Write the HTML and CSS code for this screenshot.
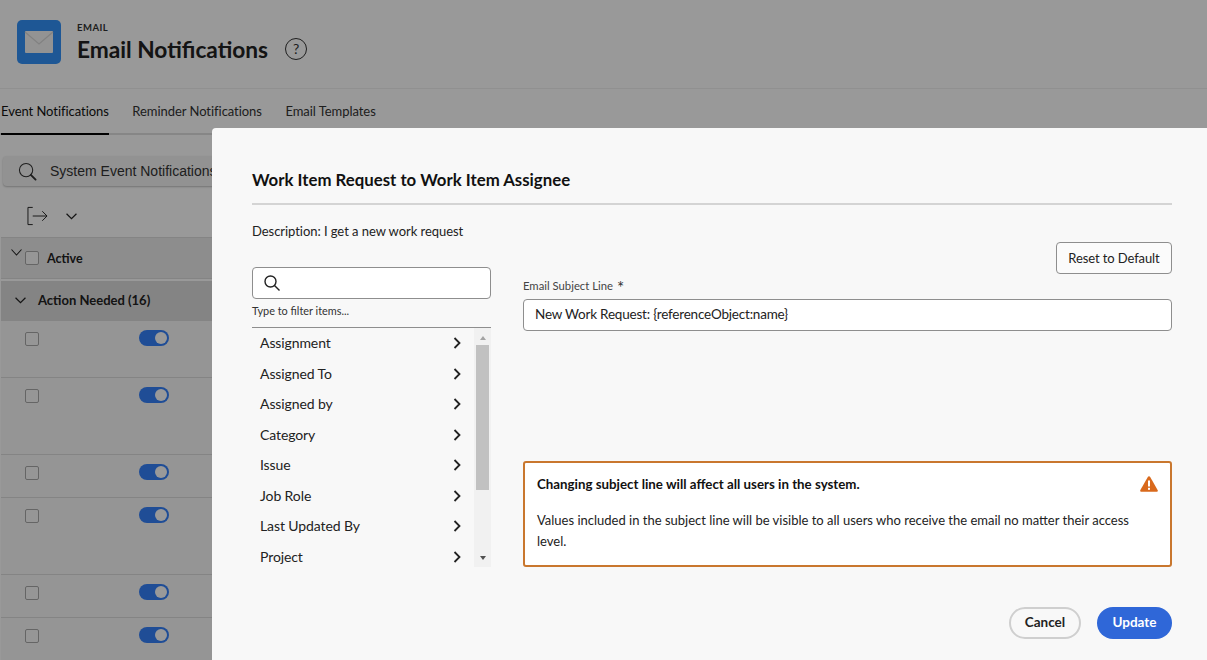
FILE: index.html
```html
<!DOCTYPE html>
<html lang="en">
<head>
<meta charset="utf-8">
<title>Email Notifications</title>
<link rel="stylesheet" href="styles.css">
</head>
<body>
<div class="page">
  <header class="head">
    <svg class="logo" viewBox="0 0 44 44"><rect width="44" height="44" rx="5" fill="#3292f8"/><rect x="8" y="11" width="28" height="22" rx="1" fill="#f5f5f5"/><path d="M8 12l14 12 14-12" fill="none" stroke="#d8d8d8" stroke-width="1.2"/></svg>
    <div class="head-text">
      <div class="eyebrow">EMAIL</div>
      <h1 class="title">Email Notifications</h1>
    </div>
    <span class="help">?</span>
  </header>
  <nav class="tabs">
    <a class="tab tab-on">Event Notifications</a>
    <a class="tab">Reminder Notifications</a>
    <a class="tab">Email Templates</a>
  </nav>
  <div class="search">
    <svg class="search-ic" viewBox="0 0 20 20"><circle cx="8.5" cy="8.5" r="7" fill="none" stroke="#333" stroke-width="1.1"/><path d="M13.5 13.5l5 5" stroke="#333" stroke-width="2" stroke-linecap="round"/></svg>
    <span class="search-text">System Event Notifications</span>
  </div>
  <div class="tools">
    <svg class="export" viewBox="0 0 22 20"><path d="M6 1H1v18h5M6 10h15M16 5l5 5-5 5" fill="none" stroke="#222" stroke-width="1"/></svg>
    <svg class="chev" viewBox="0 0 10 6"><path d="M.5.5L5 5 9.500.5" fill="none" stroke="#222" stroke-width="1.1"/></svg>
  </div>
  <div class="thead">
    <svg class="chev-a" viewBox="0 0 11 7"><path d="M.5.5L5.500 6l5-5.500" fill="none" stroke="#222" stroke-width="1.1"/></svg>
    <span class="check"></span>
    <span class="thead-label">Active</span>
  </div>
  <div class="group">
    <svg class="chev-b" viewBox="0 0 10 6"><path d="M.5.5L5 5 9.500.5" fill="none" stroke="#222" stroke-width="1.1"/></svg>
    <span class="group-label">Action Needed (16)</span>
  </div>
  <div class="row row-a"><span class="check"></span><span class="toggle"></span></div>
  <div class="row row-b"><span class="check"></span><span class="toggle"></span></div>
  <div class="row row-c"><span class="check"></span><span class="toggle"></span></div>
  <div class="row row-b"><span class="check"></span><span class="toggle"></span></div>
  <div class="row row-c"><span class="check"></span><span class="toggle"></span></div>
  <div class="row row-c"><span class="check"></span><span class="toggle"></span></div>
</div>
<div class="scrim"></div>
<section class="modal">
  <h2 class="m-title">Work Item Request to Work Item Assignee</h2>
  <p class="desc">Description: I get a new work request</p>
  <div class="cols">
    <div class="left">
      <div class="filter">
        <svg class="filter-ic" viewBox="0 0 16 16"><circle cx="6.500" cy="6.500" r="5.500" fill="none" stroke="#222" stroke-width="1.400"/><path d="M10.500 10.500l5 5" stroke="#222" stroke-width="1.400"/></svg>
      </div>
      <div class="hint">Type to filter items...</div>
      <div class="picker">
        <ul class="items">
          <li class="item">Assignment<svg class="arrow" viewBox="0 0 8 12"><path d="M1.500 1L6.500 6l-5 5" fill="none" stroke="#222" stroke-width="1.800"/></svg></li>
          <li class="item">Assigned To<svg class="arrow" viewBox="0 0 8 12"><path d="M1.500 1L6.500 6l-5 5" fill="none" stroke="#222" stroke-width="1.800"/></svg></li>
          <li class="item">Assigned by<svg class="arrow" viewBox="0 0 8 12"><path d="M1.500 1L6.500 6l-5 5" fill="none" stroke="#222" stroke-width="1.800"/></svg></li>
          <li class="item">Category<svg class="arrow" viewBox="0 0 8 12"><path d="M1.500 1L6.500 6l-5 5" fill="none" stroke="#222" stroke-width="1.800"/></svg></li>
          <li class="item">Issue<svg class="arrow" viewBox="0 0 8 12"><path d="M1.500 1L6.500 6l-5 5" fill="none" stroke="#222" stroke-width="1.800"/></svg></li>
          <li class="item">Job Role<svg class="arrow" viewBox="0 0 8 12"><path d="M1.500 1L6.500 6l-5 5" fill="none" stroke="#222" stroke-width="1.800"/></svg></li>
          <li class="item">Last Updated By<svg class="arrow" viewBox="0 0 8 12"><path d="M1.500 1L6.500 6l-5 5" fill="none" stroke="#222" stroke-width="1.800"/></svg></li>
          <li class="item">Project<svg class="arrow" viewBox="0 0 8 12"><path d="M1.500 1L6.500 6l-5 5" fill="none" stroke="#222" stroke-width="1.800"/></svg></li>
        </ul>
        <div class="sbar">
          <span class="sb-up"></span>
          <span class="sb-thumb"></span>
          <span class="sb-down"></span>
        </div>
      </div>
    </div>
    <div class="right">
      <button class="reset">Reset to Default</button>
      <label class="field-label">Email Subject Line <span class="req">*</span></label>
      <div class="subject">New Work Request: {referenceObject:name}</div>
      <div class="warn">
        <div class="warn-head">
          <strong class="warn-title">Changing subject line will affect all users in the system.</strong>
          <svg class="warn-ic" viewBox="0 0 18 16"><path d="M9 .3c.5 0 .9.300 1.200.800l7.400 12.900c.5.900 0 1.700-1 1.700H1.400c-1 0-1.500-.8-1-1.700L7.800 1.100C8.100.6 8.500.3 9 .3z" fill="#d9691c"/><rect x="8" y="4.500" width="2" height="6" fill="#fff"/><rect x="8" y="11.800" width="2" height="2" fill="#fff"/></svg>
        </div>
        <p class="warn-body">Values included in the subject line will be visible to all users who receive the email no matter their access level.</p>
      </div>
    </div>
  </div>
  <div class="actions">
    <button class="btn btn-cancel">Cancel</button>
    <button class="btn btn-update">Update</button>
  </div>
</section>
</body>
</html>
```
FILE: styles.css
```css
* { box-sizing: border-box; }
html, body { margin: 0; height: 100%; overflow: hidden; }
body { font-family: Lato, "Noto Sans", sans-serif; color: #222; background: #fff; }
.page { height: 660px; overflow: hidden; }

.head { height: 89px; display: flex; align-items: flex-start; border-bottom: 1px solid #f0f0f0; padding: 20px 0 0 17px; }
.logo { width: 44px; height: 44px; flex: none; }
.head-text { margin-left: 16px; }
.eyebrow { font-size: 9.500px; font-weight: 700; letter-spacing: .5px; line-height: 12px; margin-top: 2px; color: #333; }
.title { margin: 1px 0 0; font-size: 22.700px; font-weight: 700; line-height: 29px; color: #222; }
.help { width: 22px; height: 22px; border: 1px solid #333; border-radius: 50%; margin: 18px 0 0 17px; font-size: 14px; line-height: 20px; text-align: center; color: #333; }

.tabs { height: 46px; display: flex; gap: 23.500px; padding-left: 1px; border-bottom: 2px solid #dfdfdf; font-size: 13px; letter-spacing: -.05px; color: #333; }
.tab { height: 46px; line-height: 44px; white-space: nowrap; }
.tab-on { color: #111; border-bottom: 2px solid #000; }

.search { width: 240px; height: 30px; margin: 21px 0 0 3px; background: #f4f4f4; border-radius: 4px; box-shadow: 0 1px 2px rgba(0,0,0,.25); display: flex; align-items: center; padding-left: 15px; }
.search-ic { width: 19px; height: 19px; flex: none; }
.search-text { margin-left: 13px; font: 14px "Liberation Sans", sans-serif; color: #333; white-space: nowrap; }

.tools { height: 51px; display: flex; align-items: center; padding: 8px 0 0 27px; }
.export { width: 21px; height: 20px; }
.chev { width: 11px; height: 7px; margin-left: 18px; margin-top: 2px; }

.thead { height: 42px; display: flex; align-items: center; position: relative; background: #ececec; border-top: 1px solid #dcdcdc; border-bottom: 1px solid #dcdcdc; margin-left: 1px; padding-left: 10px; }
.chev-a { width: 11px; height: 7px; margin-top: -12px; }
.thead .check { margin-left: 3px; }
.thead-label { margin-left: 8px; font-size: 12.500px; font-weight: 700; color: #222; }
.group { height: 40px; margin: 2px 0 0 1px; display: flex; align-items: center; background: #dcdcdc; padding: 0 0 1px 14px; }
.chev-b { width: 11px; height: 7px; }
.group-label { margin: 0 0 2px 12px; font-size: 13px; font-weight: 700; color: #222; }

.row { display: flex; align-items: flex-start; margin-left: 1px; border-bottom: 1px solid #dcdcdc; padding: 11px 0 0 24px; background: #f9f9f9; }
.row-a { height: 57px; }
.row-b { height: 77px; }
.row-c { height: 43px; }
.check { width: 14px; height: 14px; flex: none; border: 1px solid #a8a8a8; border-radius: 2px; background: #fbfbfb; display: block; }
.toggle { width: 30px; height: 16px; flex: none; border-radius: 8px; background: #3480fa; margin: -2px 0 0 100px; position: relative; }
.toggle::after { content: ""; position: absolute; right: 2px; top: 2px; width: 12px; height: 12px; border-radius: 50%; background: #fff; }

.scrim { position: fixed; inset: 0; background: rgba(0,0,0,.4); }

.modal { position: fixed; left: 212px; top: 128px; right: 0; bottom: 0; background: #f8f8f8; border-radius: 4px 0 0 0; padding: 41px 35px 0 40px; display: flex; flex-direction: column; }
.m-title { margin: 0; height: 36px; font-size: 16.800px; line-height: 22px; font-weight: 700; color: #111; border-bottom: 2px solid #d4d4d4; }
.desc { margin: 0; height: 37px; padding-top: 17px; font-size: 13px; letter-spacing: -.05px; line-height: 18px; color: #222; }
.cols { display: flex; gap: 32px; height: 325px; }
.left { width: 239px; flex: none; padding-top: 25px; }
.filter { height: 32px; border: 1px solid #8e8e8e; border-radius: 4px; background: #fff; padding: 7px 0 0 11px; }
.filter-ic { width: 16px; height: 16px; display: block; }
.hint { height: 28px; padding-top: 4px; font-size: 10.900px; line-height: 16px; color: #333; }
.picker { display: flex; height: 240px; border-top: 1px solid #8e8e8e; }
.items { list-style: none; margin: 0; padding: 0 0 0 8px; flex: 1; font-size: 14px; letter-spacing: -.1px; }
.item { height: 30.500px; display: flex; align-items: center; justify-content: space-between; padding: 0 13px 1px 0; color: #222; }
.arrow { width: 8px; height: 12px; flex: none; margin-top: 1px; }
.sbar { width: 17px; flex: none; background: #f1f1f1; display: flex; flex-direction: column; align-items: center; }
.sb-up { width: 0; height: 0; margin: 8px 0 5px; border-left: 3.500px solid transparent; border-right: 3.500px solid transparent; border-bottom: 4px solid #a3a3a3; }
.sb-thumb { width: 13px; height: 145px; background: #c1c1c1; }
.sb-down { width: 0; height: 0; margin-top: auto; margin-bottom: 7px; border-left: 3.500px solid transparent; border-right: 3.500px solid transparent; border-top: 4px solid #505050; }

.right { flex: 1; display: flex; flex-direction: column; }
.reset { align-self: flex-end; width: 116px; height: 32px; border: 1px solid #8e8e8e; border-radius: 4px; background: #fbfbfb; font: 13px Lato, sans-serif; letter-spacing: -.1px; color: #222; padding: 0 0 1px; }
.field-label { margin-top: 2px; height: 23px; font-size: 11.300px; line-height: 20px; color: #444; }
.req { font-size: 17px; line-height: 10px; vertical-align: -4px; margin-left: 1px; color: #333; }
.subject { height: 32px; border: 1px solid #8e8e8e; border-radius: 4px; background: #fff; padding-left: 11px; font-size: 13.500px; letter-spacing: -.2px; line-height: 29px; color: #222; }
.warn { margin-top: auto; height: 106px; background: #fff; border: 2px solid #c9772e; border-radius: 3px; padding: 12px 12px 0; }
.warn-head { display: flex; justify-content: space-between; align-items: flex-start; }
.warn-title { font-size: 13.300px; line-height: 18px; font-weight: 700; color: #111; }
.warn-ic { width: 18px; height: 16px; flex: none; margin: 1px 0 0 0; }
.warn-body { margin: 17px 20px 0 0; font-size: 13px; line-height: 21px; color: #222; }

.actions { display: flex; justify-content: flex-end; gap: 16px; margin-top: 40px; }
.btn { height: 32px; border-radius: 16px; font: 700 13.500px Lato, sans-serif; padding: 0 0 2px; }
.btn-cancel { width: 72px; background: #f8f8f8; border: 2px solid #cfcfcf; color: #222; }
.btn-update { width: 75px; background: #2f67d8; border: 0; color: #fff; }
```
